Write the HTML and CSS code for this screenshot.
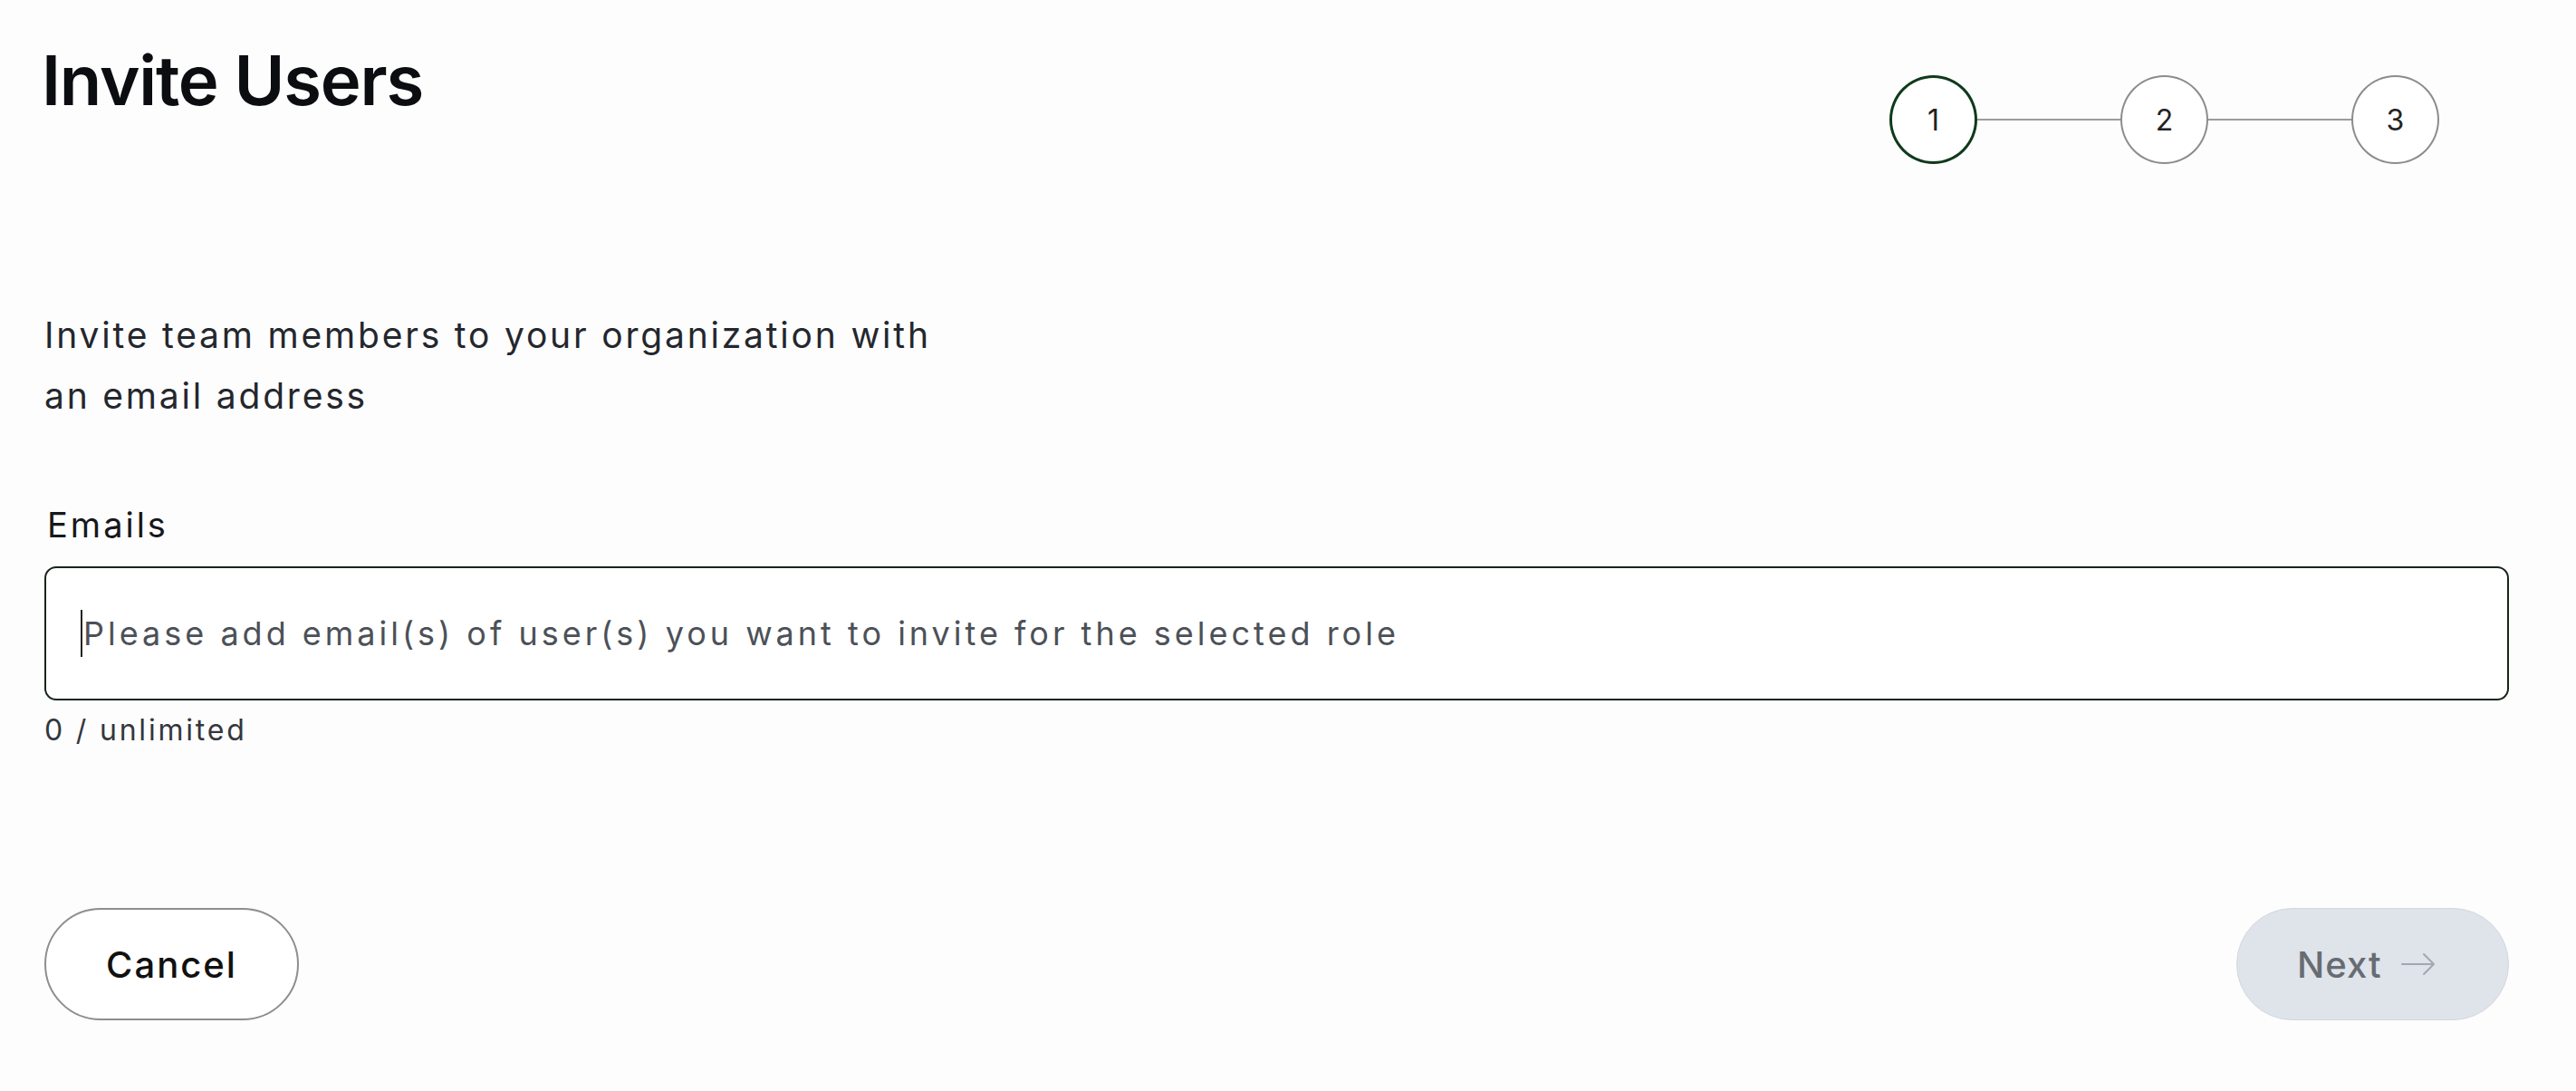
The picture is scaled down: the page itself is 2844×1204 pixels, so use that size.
FILE: index.html
```html
<!DOCTYPE html>
<html lang="en">
<head>
<meta charset="utf-8">
<title>Invite Users</title>
<link rel="stylesheet" href="styles.css">
</head>
<body>
<main class="page">
  <header class="head">
    <h1 class="title">Invite Users</h1>
    <ol class="stepper">
      <li class="step step-active">1</li>
      <li class="connector"></li>
      <li class="step">2</li>
      <li class="connector"></li>
      <li class="step">3</li>
    </ol>
  </header>

  <p class="desc">Invite team members to your organization with<br>an email address</p>

  <label class="label" for="emails">Emails</label>
  <div class="field" id="emails">
    <span class="caret"></span>
    <span class="placeholder">Please add email(s) of user(s) you want to invite for the selected role</span>
  </div>
  <div class="count">0 / unlimited</div>

  <footer class="actions">
    <button class="btn btn-cancel" type="button">Cancel</button>
    <button class="btn btn-next" type="button">Next
      <svg class="arrow" width="40" height="26" viewBox="0 0 40 26" fill="none" stroke="currentColor" stroke-width="2" stroke-linecap="round" stroke-linejoin="round"><path d="M2 13h35M26 2l11 11-11 11"/></svg>
    </button>
  </footer>
</main>
</body>
</html>
```

FILE: styles.css
```css
* { box-sizing: border-box; }

html, body {
  margin: 0;
  padding: 0;
  background: #fdfdfd;
}

body {
  font-family: "Inter", "Liberation Sans", sans-serif;
  color: #14171c;
  width: 2844px;
  height: 1204px;
  overflow: hidden;
}

.page {
  padding: 0 74px 0 49px;
  display: flex;
  flex-direction: column;
}

.head {
  display: flex;
  justify-content: space-between;
  align-items: flex-start;
  height: 181px;
}

.title {
  margin: 50px 0 0 -3px;
  font-size: 76px;
  line-height: 76px;
  font-weight: 600;
  letter-spacing: -1.2px;
  color: #0b0d10;
}

.stepper {
  list-style: none;
  margin: 83px 77px 0 0;
  padding: 0;
  display: flex;
  align-items: center;
}

.step {
  width: 97px;
  height: 98px;
  border-radius: 50%;
  border: 2px solid #8a8d90;
  display: flex;
  align-items: center;
  justify-content: center;
  font-size: 32px;
  color: #222;
  background: #fff;
}

.step-active {
  border: 3.5px solid #0f3a1c;
}

.connector {
  width: 158px;
  height: 2px;
  background: #9a9c9e;
}

.desc {
  margin: 155px 0 0 0;
  font-size: 39px;
  line-height: 67px;
  color: #24272d;
  letter-spacing: 2.8px;
}

.label {
  margin-top: 87px;
  font-size: 38px;
  line-height: 44px;
  color: #16181b;
  padding-left: 3px;
  letter-spacing: 3px;
}

.field {
  margin-top: 24px;
  height: 148px;
  border: 2px solid #18261b;
  border-radius: 13px;
  background: #fff;
  display: flex;
  align-items: center;
  padding-left: 38px;
}

.caret {
  width: 2px;
  height: 52px;
  background: #222;
  margin-right: 1px;
}

.placeholder {
  font-size: 36px;
  line-height: 44px;
  color: #4c5158;
  letter-spacing: 4px;
}

.count {
  margin-top: 13px;
  font-size: 32px;
  line-height: 40px;
  color: #33373d;
  letter-spacing: 2.8px;
}

.actions {
  margin-top: 176px;
  display: flex;
  justify-content: space-between;
  align-items: center;
}

.btn {
  height: 124px;
  border-radius: 62px;
  font-family: "Inter", "Liberation Sans", sans-serif;
  font-size: 40px;
  font-weight: 500;
  display: flex;
  align-items: center;
  cursor: pointer;
}

.btn-cancel {
  width: 281px;
  padding: 0;
  justify-content: center;
  background: #fff;
  border: 2px solid #8c8e90;
  color: #111;
  letter-spacing: 2px;
}

.btn-next {
  width: 301px;
  padding: 0 0 0 66px;
  background: #dfe3ea;
  border: 1px solid #d3d8df;
  color: #676c73;
  gap: 20px;
  letter-spacing: 1px;
}

.arrow {
  color: #a3a8b0;
}
```
